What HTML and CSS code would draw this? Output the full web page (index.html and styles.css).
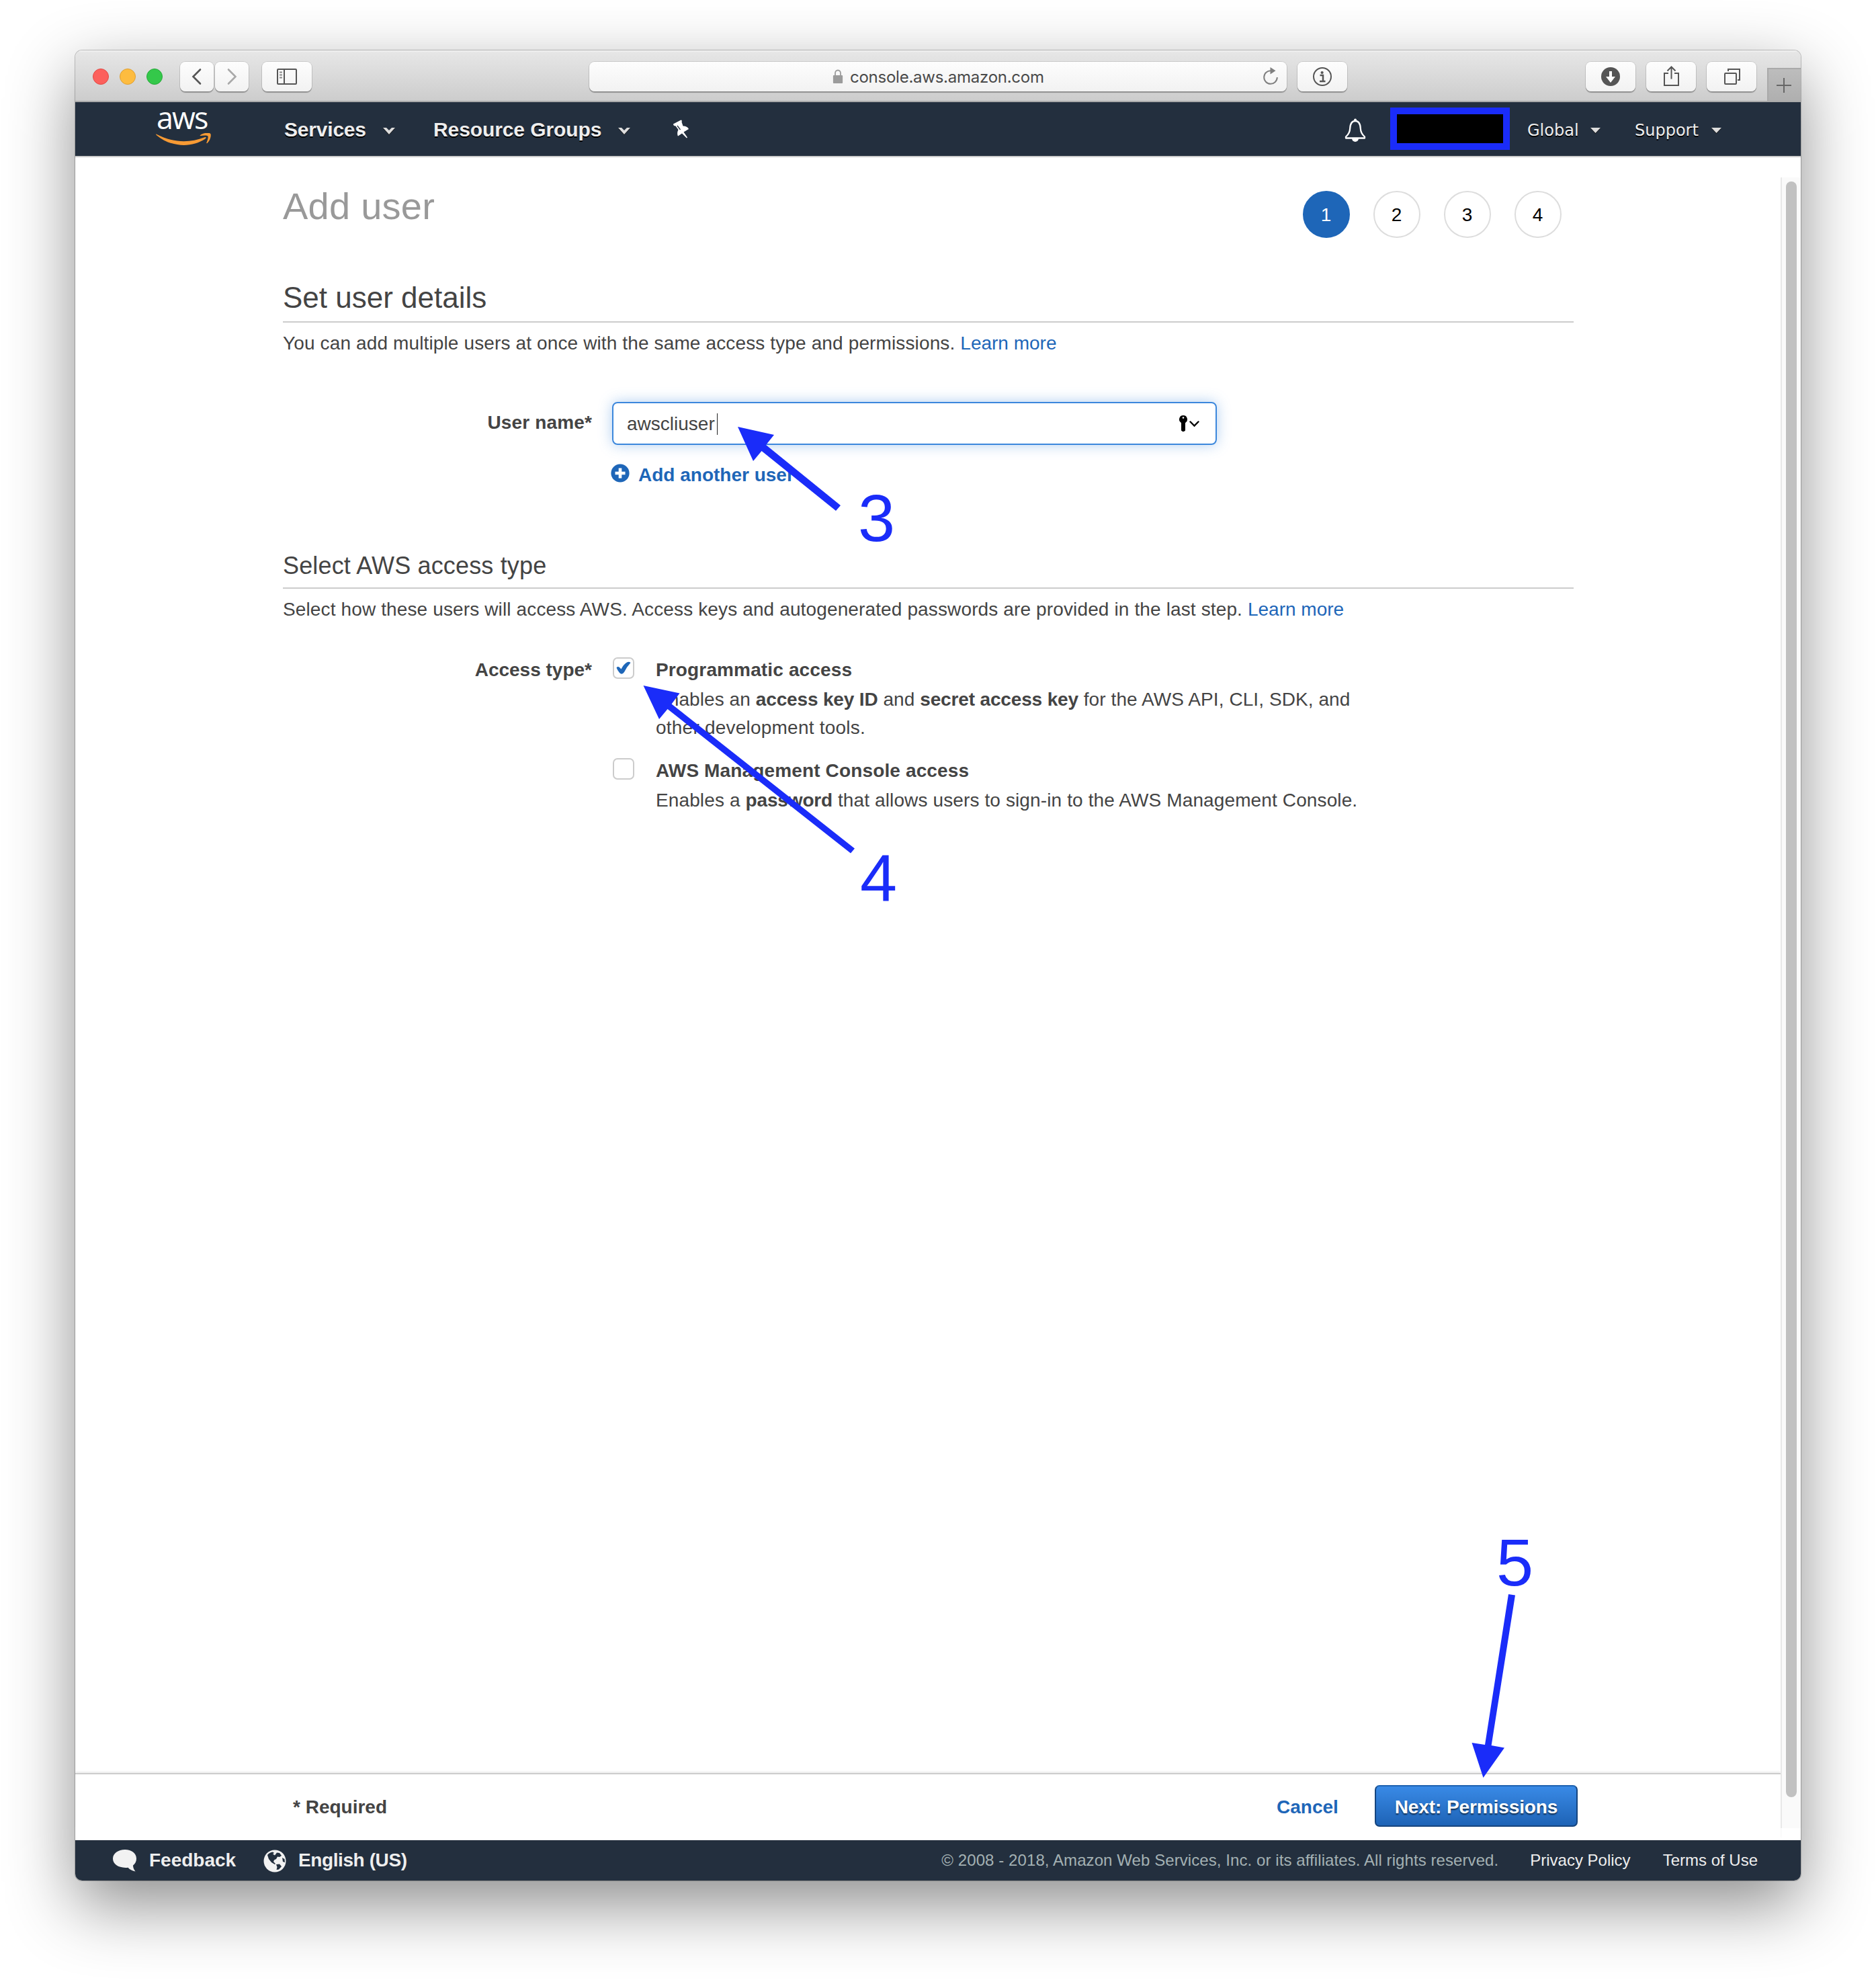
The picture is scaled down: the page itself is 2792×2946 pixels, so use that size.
FILE: index.html
```html
<!DOCTYPE html>
<html lang="en">
<head>
<meta charset="utf-8">
<title>Add user</title>
<link rel="stylesheet" href="styles.css">
</head>
<body>
<div class="window">
  <header class="toolbar">
    <div class="lights"><i class="light red"></i><i class="light amber"></i><i class="light green"></i></div>
    <div class="history">
      <span class="tool tool-nav"><svg width="50" height="44" viewBox="0 0 50 44"><path d="M30 11.500L19.500 22L30 32.500" fill="none" stroke="#555" stroke-width="2.600" stroke-linecap="round"/></svg></span>
      <span class="tool tool-nav"><svg width="50" height="44" viewBox="0 0 50 44"><path d="M20 11.500L30.500 22L20 32.500" fill="none" stroke="#a9a9a9" stroke-width="2.600" stroke-linecap="round"/></svg></span>
    </div>
    <span class="tool tool-side"><svg width="74" height="44" viewBox="0 0 74 44"><g fill="none" stroke="#555" stroke-width="2"><rect x="23" y="11" width="28" height="22" rx="1"/><path d="M33 11V33"/></g><path d="M26 15.500H30M26 19.500H30M26 23.500H30" stroke="#888" stroke-width="1.800"/></svg></span>
    <div class="tool address">
      <svg class="lock" width="16" height="22" viewBox="0 0 18 22" preserveAspectRatio="none"><rect x="1" y="9" width="16" height="12" rx="1" fill="#9b9b9b"/><path d="M4.500 9V6a4.500 4.500 0 0 1 9 0V9" fill="none" stroke="#9b9b9b" stroke-width="2"/></svg>
      <span class="host">console.aws.amazon.com</span>
      <svg class="reload" width="24" height="28" viewBox="0 0 24 28"><path d="M12.500 6.200A9.800 9.800 0 1 0 21.800 16" fill="none" stroke="#808080" stroke-width="2"/><path d="M11.500 1L19.500 6.300L11.500 11.600Z" fill="#808080"/></svg>
    </div>
    <span class="tool tool-info"><svg width="74" height="44" viewBox="0 0 74 44"><circle cx="37" cy="22" r="13" fill="none" stroke="#555" stroke-width="2"/><circle cx="36.600" cy="16" r="2.100" fill="#555"/><path d="M33.500 20H38V28.600M33 29H41.500" fill="none" stroke="#555" stroke-width="2.500"/></svg></span>
    <div class="tools">
      <span class="tool tool-side"><svg width="74" height="44" viewBox="0 0 74 44"><circle cx="37" cy="22" r="14" fill="#555"/><path d="M35 14H39V22H44L37 31L30 22H35Z" fill="#fff"/></svg></span>
      <span class="tool tool-side"><svg width="74" height="44" viewBox="0 0 74 44"><path d="M33 17H27V35H48V17H42M37.500 25.500V8M31.500 13.500L37.500 7.500L43.500 13.500" fill="none" stroke="#555" stroke-width="2"/></svg></span>
      <span class="tool tool-side"><svg width="74" height="44" viewBox="0 0 74 44"><g fill="none" stroke="#555" stroke-width="2"><rect x="27" y="17" width="17" height="16" rx="1"/><path d="M32 14V11H49V27H46"/></g></svg></span>
    </div>
    <span class="newtab"><svg width="50" height="49" viewBox="0 0 50 49"><path d="M14 26H36M25 15V37" stroke="#666" stroke-width="2"/></svg></span>
  </header>

  <nav class="nav">
    <div class="logo">
      <span class="logo-word">aws</span>
      <svg class="smile" width="84" height="20" viewBox="0 0 84 20"><path d="M.500 1.500C24 14 49 15.500 72.500 6.200C75 5.300 75.500 7 73.500 8.500C53 22.500 22 21 1 3.200C0 2.200-.300 1 .500 1.500Z" fill="#f79a34"/><path d="M66 3.200C70-.500 78.500-1.200 81.300.900C82.800 4 80.500 11.500 76.500 15C75.500 15.600 75 15.200 75.500 14C77 10.500 78.300 6 77.300 4.500C76 3 70.500 3.600 66.800 4C65.500 4.200 65.300 3.800 66 3.200Z" fill="#f79a34"/></svg>
    </div>
    <span class="nav-item services">Services</span>
    <svg class="chev" width="18" height="10" viewBox="0 0 18 10"><path d="M0 0H5L9 4L13 0H18L9 10Z" fill="#ddd"/></svg>
    <span class="nav-item groups">Resource Groups</span>
    <svg class="chev" width="18" height="10" viewBox="0 0 18 10"><path d="M0 0H5L9 4L13 0H18L9 10Z" fill="#ddd"/></svg>
    <svg class="pin" width="26" height="28" viewBox="0 0 26 28"><path d="M1 6.500L12.500 .500Q14.500 1 13.500 3.500L15.500 9.500Q22 9.500 24 14L16.500 18.500L22 26.500L21 27.500L14 20.500L8 24.500Q6 20 8.500 15L4.500 9.500Q1 9.500 1 6.500Z" fill="#fff"/><path d="M7 9L11.500 15" stroke="#232f3e" stroke-width="1.300"/></svg>
    <svg class="bell" width="32" height="36" viewBox="0 0 32 36"><path d="M16 4C9.500 4 8.500 10 8.200 15C8 21 5.500 24.500 2 27.500V29.500H30V27.500C26.500 24.500 24 21 23.800 15C23.500 10 22.500 4 16 4Z" fill="none" stroke="#fff" stroke-width="2.300" stroke-linejoin="round"/><circle cx="16" cy="2.600" r="2" fill="#fff"/><path d="M11 30H21A5 5 0 0 1 11 30Z" fill="#fff"/></svg>
    <span class="account"></span>
    <span class="nav-small">Global</span>
    <svg class="tri" width="15" height="8" viewBox="0 0 15 8"><path d="M0 0H15L7.500 8Z" fill="#ddd"/></svg>
    <span class="nav-small support">Support</span>
    <svg class="tri" width="15" height="8" viewBox="0 0 15 8"><path d="M0 0H15L7.500 8Z" fill="#ddd"/></svg>
  </nav>

  <div class="view">
    <main class="page">
      <div class="page-head">
        <h1 class="title">Add user</h1>
        <ol class="steps"><li class="step current">1</li><li class="step">2</li><li class="step">3</li><li class="step">4</li></ol>
      </div>
      <h2 class="heading">Set user details</h2>
      <p class="lead">You can add multiple users at once with the same access type and permissions. <a class="link">Learn more</a></p>
      <div class="row name-row">
        <label class="label">User name*</label>
        <div class="field">
          <div class="input"><span class="value">awscliuser</span><i class="cursor"></i>
            <svg class="key" width="34" height="26" viewBox="0 0 34 26"><path d="M6 0A6 6 0 0 1 9 11.200V22.500Q6 26 3 22.500V11.200A6 6 0 0 1 6 0Z" fill="#000"/><circle cx="6" cy="3.500" r="1.300" fill="#fff"/><path d="M16.500 9.500L22.500 15.500L28.500 9.500" fill="none" stroke="#000" stroke-width="2.400" stroke-linecap="round"/></svg>
          </div>
          <a class="add"><svg width="28" height="28" viewBox="0 0 28 28"><circle cx="14" cy="14" r="13.600" fill="#1e66b8"/><path d="M14 6.500V21.500M6.500 14H21.500" stroke="#fff" stroke-width="4.600"/></svg><span class="add-text">Add another user</span></a>
        </div>
      </div>
      <h3 class="heading sub">Select AWS access type</h3>
      <p class="lead">Select how these users will access AWS. Access keys and autogenerated passwords are provided in the last step. <a class="link">Learn more</a></p>
      <div class="row type-row">
        <span class="label">Access type*</span>
        <div class="options">
          <div class="option">
            <span class="box"><svg width="28" height="28" viewBox="0 0 28 28"><path d="M3.500 13.500Q5.500 11 8 13L10.500 15.500Q14 8.500 19 5.500Q22 4 24.500 6Q19 12 15 20Q11.500 25 8 21Q5 17.500 3.500 13.500Z" fill="#1e66b8"/></svg></span>
            <div><b class="name">Programmatic access</b><p class="about"><span class="keys">Enables an <b>access key ID</b> and <b>secret access key</b> for the AWS API, CLI, SDK, and</span><br><span class="tools-line">other development tools.</span></p></div>
          </div>
          <div class="option">
            <span class="box"></span>
            <div><b class="name">AWS Management Console access</b><p class="about">Enables a <b>password</b> that allows users to sign-in to the AWS Management Console.</p></div>
          </div>
        </div>
      </div>
    </main>
    <div class="actions">
      <b class="required">* Required</b>
      <a class="cancel">Cancel</a>
      <span class="next">Next: Permissions</span>
    </div>
    <div class="scroll"><i class="thumb"></i></div>
  </div>

  <footer class="footer">
    <svg class="bubble" width="36" height="34" viewBox="0 0 36 34"><path d="M18 0C28 0 35 5.500 35 13.500C35 18 33 21 30 23.500C30 27 31.500 30 33.500 32.500C28.500 31.500 25 29.500 22.500 26.700C9 28 0 22 0 13.500C0 5.500 8 0 18 0Z" fill="#f2f2f2"/></svg>
    <b class="feedback">Feedback</b>
    <svg class="globe" width="34" height="34" viewBox="0 0 34 34"><circle cx="17" cy="17" r="16.500" fill="#f2f2f2"/><path d="M6 8Q9 4 14 3.500L16 5L14 6.500L17 8.500L20 4.500L24 5L27 9L24 11L21 10.500L19 14L16 15.500L15 18L18 21L17 22L12 19L8 14ZM28 12L31.500 14L32 19L29 18ZM19 22L24 21.500L27 25L23 29.500L19.500 30L20.500 26Z" fill="#232f3e"/></svg>
    <b class="language">English (US)</b>
    <span class="copyright">© 2008 - 2018, Amazon Web Services, Inc. or its affiliates. All rights reserved.</span>
    <span class="privacy">Privacy Policy</span>
    <span class="terms">Terms of Use</span>
  </footer>
</div>

<svg class="notes" width="2792" height="2946" viewBox="0 0 2792 2946">
  <path d="M1098 635L1152 647L1140 662L1251 752L1244 760L1133.500 671L1121 686Z"/>
  <path d="M957.500 1020L1011.500 1031.500L999.500 1047.500L1272 1262.500L1266 1269.500L993.500 1055L981 1070Z"/>
  <path d="M2245 2372L2255 2373.500L2219.600 2597L2239 2600.500L2207.500 2645L2190.500 2593L2210 2596Z"/>
  <text x="1277" y="805">3</text>
  <text x="1280" y="1340">4</text>
  <text x="2227" y="2359">5</text>
</svg>
</body>
</html>
```
FILE: styles.css
```css
* { box-sizing: border-box; }
body { margin: 0; width: 2792px; height: 2946px; padding: 75px 112px 148px; background: #fff; position: relative; overflow: hidden; font-family: "Liberation Sans", Arial, sans-serif; font-size: 28px; color: #444; white-space: nowrap; }
svg { display: block; flex: none; }
h1, h2, h3, p, ol { margin: 0; padding: 0; font-weight: normal; }

.window { width: 2568px; height: 2723px; display: flex; flex-direction: column; border-radius: 10px; background: #fff; box-shadow: 0 0 0 1px rgba(0,0,0,.22), 0 36px 100px rgba(0,0,0,.45); overflow: hidden; }

.toolbar { height: 77px; flex: none; display: flex; align-items: flex-start; padding: 17px 0 0 26px; background: linear-gradient(#f4f4f4 0, #e6e6e6 3px, #cdcdcd 74px); border-bottom: 2px solid #aaa; }
.lights { display: flex; gap: 16px; padding-top: 10px; width: 130px; }
.light { width: 24px; height: 24px; border-radius: 50%; border: 1px solid; }
.red { background: #fc605c; border-color: #e14a45; }
.amber { background: #fdbc40; border-color: #dfa033; }
.green { background: #34c84a; border-color: #27a93a; }
.history { display: flex; gap: 2px; margin-right: 20px; }
.tool { height: 44px; border-radius: 8px; background: linear-gradient(#fdfdfd, #f2f2f2); box-shadow: 0 0 0 1px rgba(0,0,0,.1), 0 2px 1px rgba(0,0,0,.28); flex: none; }
.tool-nav { width: 50px; }
.tool-side, .tool-info { width: 74px; }
.address { width: 1038px; margin-left: 413px; display: flex; align-items: center; justify-content: flex-end; padding-right: 12px; }
.lock { margin-right: 10px; }
.host { color: #4a4a4a; font: 24px/44px Inter, sans-serif; padding-top: 2px; letter-spacing: -.25px; width: 289px; margin-right: 325px; }
.reload { margin-top: -2px; }
.tool-info { margin-left: 16px; }
.tools { display: flex; gap: 16px; margin-left: auto; margin-right: 16px; }
.newtab { width: 50px; height: 49px; margin-top: 9px; background: linear-gradient(#bdbdbd, #afafaf); box-shadow: inset 2px 2px 0 #a9a9a9; }

.nav { height: 82px; flex: none; display: flex; background: #232f3e; border-bottom: 2px solid #ccc; padding-left: 120px; color: #eee; }
.logo { width: 191px; height: 80px; }
.logo-word { display: block; font: 500 45px/46px "Open Sans", sans-serif; letter-spacing: -2px; color: #fff; height: 46px; padding-left: 1px; }
.nav-item { font-weight: bold; font-size: 30px; line-height: 80px; text-shadow: 0 2px 0 #000; margin-top: 1px; height: 78px; letter-spacing: -.2px; }
.services { width: 147px; }
.groups { width: 275px; margin-left: 57px; letter-spacing: -.1px; }
.chev { margin-top: 38px; filter: drop-shadow(0 1px 0 #111); }
.pin { margin: 26px 0 0 63px; }
.bell { margin: 24px 0 0 974px; }
.account { width: 178px; height: 63px; margin: 8px 26px 0 36px; background: #000; border: 10px solid #1a2cf9; }
.nav-small { font: 24px/80px "DejaVu Sans", sans-serif; text-shadow: 0 2px 0 #000; width: 94px; margin-top: 2px; height: 78px; }
.support { margin-left: 51px; width: 114px; }
.tri { margin-top: 38px; filter: drop-shadow(0 1px 0 #111); }

.view { flex: 1; display: grid; grid-template: 2404px 1fr / 2538px 30px; }
.page { grid-area: 1 / 1; padding: 43px 308px 0 309px; }
.page-head { display: flex; justify-content: space-between; height: 84px; padding-right: 18px; }
.title { font-size: 56px; line-height: 60px; color: #999; letter-spacing: .25px; }
.steps { display: flex; gap: 35px; list-style: none; padding-top: 7px; color: #000; }
.step { width: 70px; height: 70px; border: 2px solid #ddd; border-radius: 50%; text-align: center; line-height: 68px; padding-right: 1px; }
.current { background: #1e66b8; border-color: #1e66b8; color: #fff; }
.heading { margin-top: 57px; padding-bottom: 10px; border-bottom: 2px solid #ccc; font-size: 44px; line-height: 50px; }
.sub { margin-top: 94px; padding-bottom: 12px; font-size: 36px; line-height: 40px; letter-spacing: .16px; }
.lead { margin-top: 9px; line-height: 44px; letter-spacing: .13px; }
.link { color: #1e66b8; letter-spacing: 0; }
.row { display: grid; grid-template-columns: 460px 1fr; column-gap: 30px; line-height: 44px; }
.label { font-weight: bold; text-align: right; }
.name-row { margin-top: 65px; }
.name-row .label { padding-top: 9px; letter-spacing: .15px; }
.input { width: 900px; height: 64px; border: 2px solid #3b87dc; border-radius: 8px; box-shadow: 0 0 20px rgba(59,135,220,.4); display: flex; align-items: center; padding: 2px 20px 0 20px; }
.cursor { width: 1px; height: 32px; background: #222; margin-left: 3px; }
.key { margin-left: auto; }
.add { display: flex; gap: 13px; margin: 22px 0 0 -2px; color: #1e66b8; font-weight: bold; height: 44px; }
.add svg { margin-top: 6px; }
.add-text { margin-top: 1px; }
.type-row { margin-top: 46px; }
.option { display: grid; grid-template-columns: 32px 1fr; column-gap: 32px; margin: 0 0 21px 1px; }
.box { width: 32px; height: 32px; margin-top: 3px; border: 2px solid #ccc; border-radius: 7px; }
.name { display: block; letter-spacing: .14px; }
.about { margin-top: 1px; line-height: 42px; letter-spacing: .12px; }
.about b { letter-spacing: -.15px; }
.keys { letter-spacing: .08px; }
.tools-line { letter-spacing: .22px; }
.actions { grid-area: 2 / 1; border-top: 2px solid #ccc; box-shadow: 0 -2px 3px rgba(0,0,0,.08); display: flex; height: 98px; line-height: 44px; padding: 27px 0 0 324px; font-weight: bold; }
.required { width: 1464px; }
.cancel { color: #1e66b8; width: 146px; }
.next { width: 302px; height: 62px; margin-top: -11px; padding-top: 1px; border: 2px solid #16457e; border-top-color: #1e62b0; border-radius: 7px; background: linear-gradient(#398ae6, #1e63b6); color: #fff; text-align: center; line-height: 60px; letter-spacing: -.1px; text-shadow: 0 2px 2px rgba(0,0,0,.6); }
.scroll { grid-area: 1 / 2 / 3 / 3; margin-top: 30px; height: 2456px; border-left: 2px solid #e8e8e8; background: #fafafa; padding: 6px 6px 0; }
.thumb { display: block; width: 16px; height: 2404px; border-radius: 8px; background: #c1c1c1; }

.footer { height: 60px; flex: none; background: #232f3e; display: flex; color: #eee; line-height: 60px; padding-left: 56px; }
.bubble { margin: 14px 18px 0 0; }
.feedback { width: 171px; }
.globe { margin: 14px 18px 0 -1px; }
.language { letter-spacing: -.4px; }
.copyright, .privacy, .terms { font-size: 24px; }
.copyright { margin-left: auto; color: #a3b1b3; letter-spacing: .08px; }
.privacy { margin-left: 47px; }
.terms { margin: 0 64px 0 48px; }

.notes { position: absolute; left: 0; top: 0; fill: #1a2cf9; font-size: 99px; }
```
